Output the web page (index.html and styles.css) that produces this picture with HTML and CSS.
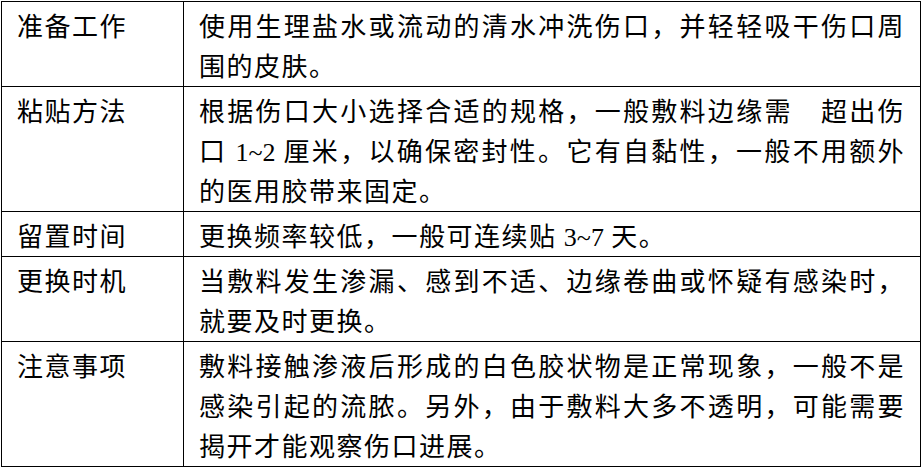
FILE: index.html
```html
<!DOCTYPE html>
<html lang="zh-CN">
<head>
<meta charset="utf-8">
<link rel="stylesheet" href="styles.css">
</head>
<body>
<div class="wrap">
<table class="info">
  <colgroup><col class="c1"><col class="c2"></colgroup>
  <tr><td>准备工作</td><td>使用生理盐水或流动的清水冲洗伤口，并轻轻吸干伤口周围的皮肤。</td></tr>
  <tr><td>粘贴方法</td><td>根据伤口大小选择合适的规格，一般敷料边缘需　超出伤口 <span class="lat">1~2</span> 厘米，以确保密封性。它有自黏性，一般不用额外的医用胶带来固定。</td></tr>
  <tr><td>留置时间</td><td>更换频率较低，一般可连续贴 <span class="lat">3~7</span> 天。</td></tr>
  <tr><td>更换时机</td><td>当敷料发生渗漏、感到不适、边缘卷曲或怀疑有感染时，就要及时更换。</td></tr>
  <tr><td>注意事项</td><td>敷料接触渗液后形成的白色胶状物是正常现象，一般不是感染引起的流脓。另外，由于敷料大多不透明，可能需要揭开才能观察伤口进展。</td></tr>
</table>
</div>
</body>
</html>
```

FILE: styles.css
```css
html, body {
  margin: 0;
  padding: 0;
  background: #fff;
}
.wrap {
  padding: 1px 0 0 1px;
}
.info {
  border-collapse: collapse;
  width: 919px;
  table-layout: fixed;
  font-family: "Noto Sans CJK SC", sans-serif;
  font-size: 26px;
  letter-spacing: 1.5px;
  line-height: 40px;
  color: #000;
}
.c1 { width: 182px; }
.c2 { width: 737px; }
.info td {
  border: 1px solid #000;
  padding: 3px 15px 1px 15px;
  vertical-align: top;
  text-align: justify;
}
.lat {
  font-family: "Liberation Serif", serif;
  letter-spacing: 0;
  line-height: 1;
}
```
